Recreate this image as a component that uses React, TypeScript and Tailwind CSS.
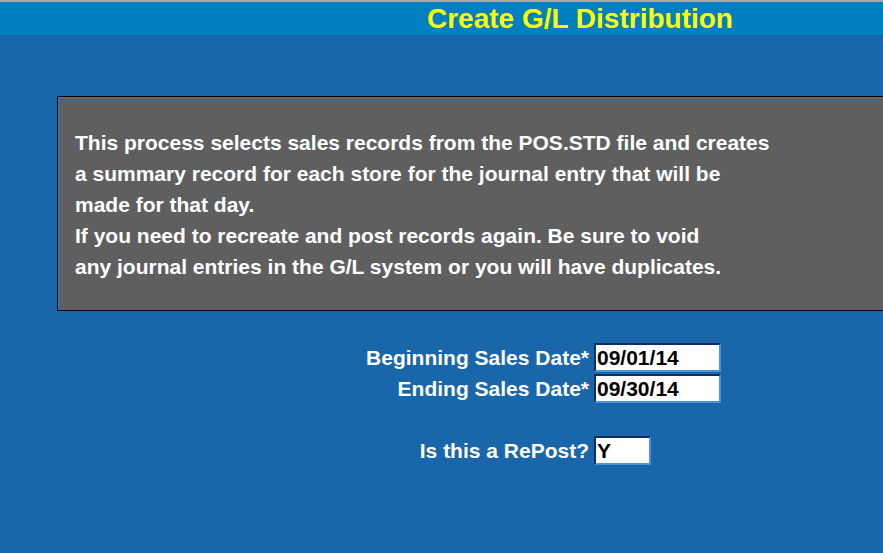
export default function App() {
  const font = { fontFamily: '"Liberation Sans", Arial, sans-serif' }

  return (
    <div className="w-[883px] h-[553px] overflow-hidden bg-[#1a66aa] font-bold" style={font}>
      <div className="h-[2px] bg-[#a8a8a8]" />
      <div className="h-[33px] bg-[#0080c0] pl-[427px] flex items-center">
        <h1 className="text-[28px] leading-none text-[#ffff00] font-bold">
          Create G/L Distribution
        </h1>
      </div>

      <div className="ml-[57px] mt-[61px] w-[840px] h-[215px] border border-black bg-[#5f5f5f] shadow-[inset_1px_1px_0_#2a7ad0] pl-[17px] pt-[30px]">
        <p className="text-white text-[21px] leading-[31px]">
          This process selects sales records from the POS.STD file and creates
          <br />
          a summary record for each store for the journal entry that will be
          <br />
          made for that day.
          <br />
          If you need to recreate and post records again. Be sure to void
          <br />
          any journal entries in the G/L system or you will have duplicates.
        </p>
      </div>

      <div className="mt-[32px] flex flex-col">
        <Row label="Beginning Sales Date*" value="09/01/14" width="w-[127px]" />
        <div className="h-[2px]" />
        <Row label="Ending Sales Date*" value="09/30/14" width="w-[127px]" />
        <div className="h-[33px]" />
        <Row label="Is this a RePost?" value="Y" width="w-[57px]" />
      </div>
    </div>
  )
}

function Row({ label, value, width }: { label: string; value: string; width: string }) {
  return (
    <div className="flex items-center h-[29px]">
      <div className="w-[594px] text-right text-white text-[21px] pr-[5px]">{label}</div>
      <div
        className={`${width} h-[29px] bg-white border-2 border-t-[#0b2e63] border-l-[#0b2e63] border-b-[#4a94dc] border-r-[#4a94dc] flex items-center pl-[1px] text-black text-[21px]`}
      >
        {value}
      </div>
    </div>
  )
}
